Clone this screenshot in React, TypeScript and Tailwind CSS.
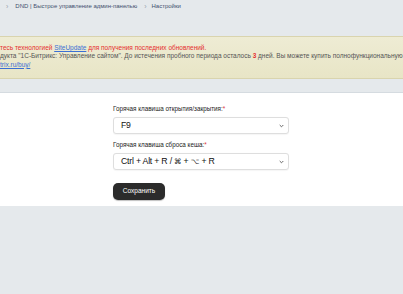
import React from "react";

function Chevron() {
  return (
    <svg width="5" height="4" viewBox="0 0 5 4" className="shrink-0">
      <path d="M0.7 1 L2.5 2.8 L4.3 1" fill="none" stroke="#555" strokeWidth="0.9" />
    </svg>
  );
}

function Field({ label, children }: { label: string; children: React.ReactNode }) {
  return (
    <div className="flex flex-col">
      <div className="h-[8px] text-[6.3px] leading-[8px] text-[#222] font-['Liberation_Sans',sans-serif]">
        {label}
        <span className="text-[#e0313b]">*</span>
      </div>
      <div className="mt-[4px] flex h-[17px] w-[176px] items-center justify-between rounded-[3px] border border-[#dedede] bg-white pl-[7px] pr-[4px] shadow-[0_0.5px_1px_rgba(0,0,0,0.04)]">
        <span className="text-[8.7px] leading-none tracking-[-0.2px] text-[#111] font-['Liberation_Sans',sans-serif]">{children}</span>
        <Chevron />
      </div>
    </div>
  );
}

export default function App() {
  return (
    <div className="h-[294px] w-[403px] overflow-hidden bg-[#e5e9ec] font-['Liberation_Sans',sans-serif]">
      {/* breadcrumb */}
      <div className="flex h-[11px] items-center pt-[1px] text-[6px] leading-none text-[#43506e]">
        <span className="ml-[6px] text-[7px] text-[#9aa3ad]">›</span>
        <span className="ml-[7px]">DND | Быстрое управление админ-панелью</span>
        <span className="ml-[7px] text-[7px] text-[#9aa3ad]">›</span>
        <span className="ml-[5px]">Настройки</span>
      </div>

      {/* notice banner */}
      <div className="mt-[25px] h-[43px] border-y border-[#d9d4ae] bg-gradient-to-b from-[#eeecd4] to-[#e8e5c6] pt-[7px] text-[6.5px] leading-[8.4px] whitespace-nowrap">
        <div className="text-[#e5302f]">
          тесь технологией{" "}
          <span className="text-[#3b6fd4] underline">SiteUpdate</span> для получения последних обновлений.
        </div>
        <div className="text-[#555]">
          дукта "1С-Битрикс: Управление сайтом". До истечения пробного периода осталось{" "}
          <span className="font-bold text-[#e5302f]">3</span> дней. Вы можете купить полнофункциональную
        </div>
        <div className="text-[#3b6fd4] underline">trix.ru/buy/</div>
      </div>

      {/* settings panel */}
      <div className="mt-[13px] h-[114px] border-t border-[#d5dbe0] bg-white pl-[113px] pt-[12px]">
        <Field label="Горячая клавиша открытия/закрытия:">F9</Field>
        <div className="mt-[7px]">
          <Field label="Горячая клавиша сброса кеша:">
            Ctrl + Alt + R / <span className="font-['DejaVu_Sans'] text-[7.5px]">⌘</span> +{" "}
            <span className="font-['DejaVu_Sans'] text-[7.5px]">⌥</span> + R
          </Field>
        </div>
        <button className="mt-[13px] flex h-[17px] w-[52px] items-center justify-center rounded-[5px] bg-[#2b2b2b] text-[6.5px] leading-none text-white shadow-[0_1px_1px_rgba(0,0,0,0.25)]">
          Сохранить
        </button>
      </div>
    </div>
  );
}
